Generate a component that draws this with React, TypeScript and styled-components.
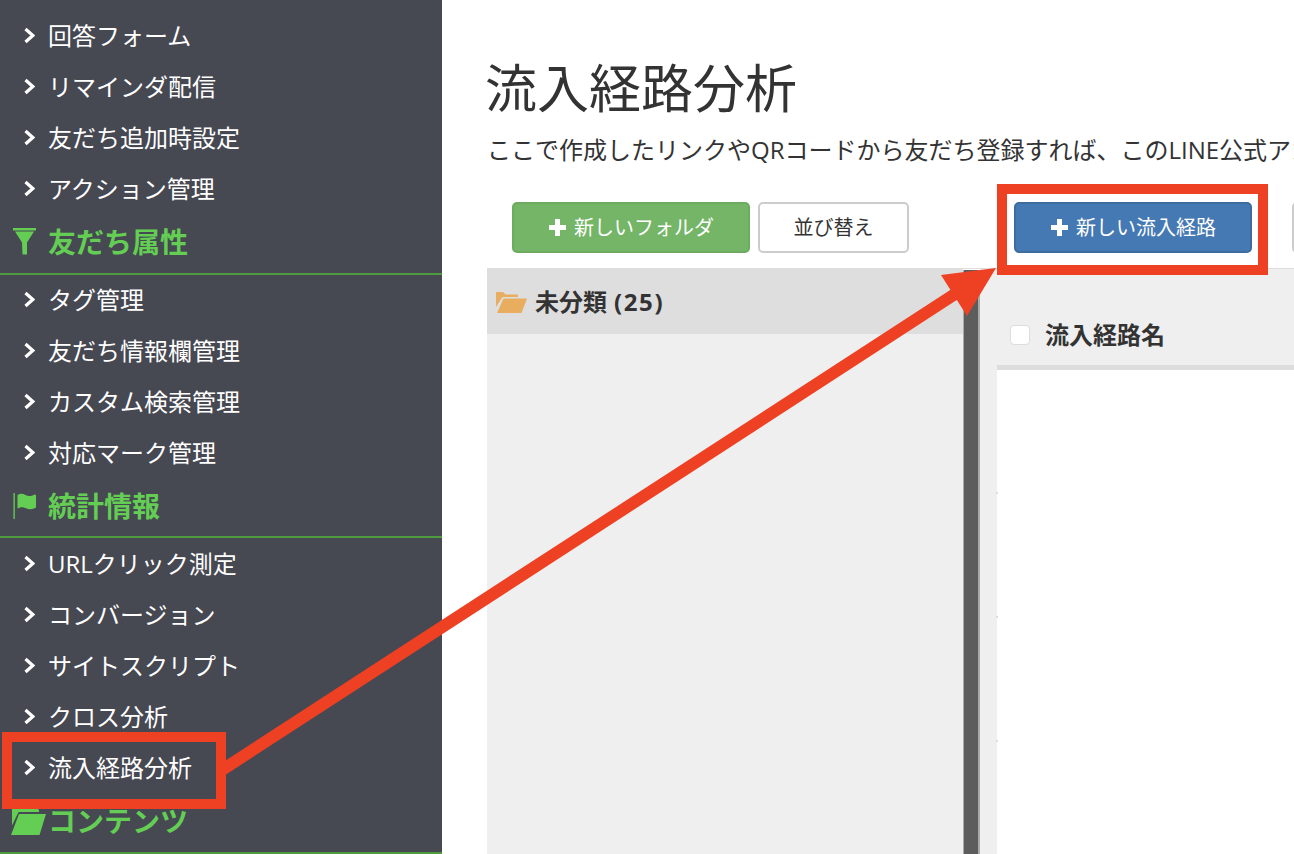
import React from "react";
import styled, { createGlobalStyle } from "styled-components";

const Global = createGlobalStyle`
  html, body { margin: 0; padding: 0; background: #fff; }
  body { font-family: "Open Sans", "Noto Sans CJK JP", sans-serif; color: #333; }
  * { box-sizing: border-box; }
`;

const Page = styled.div`
  position: relative;
  display: flex;
  width: 1294px;
  height: 854px;
  overflow: hidden;
  background: #fff;
`;

const Sidebar = styled.nav`
  flex: 0 0 442px;
  height: 854px;
  padding-top: 10px;
  background: #464852;
  overflow: hidden;
`;

const Item = styled.div`
  display: flex;
  align-items: center;
  height: 51px;
  padding-left: 24px;
  gap: 13px;
  color: #fff;
  font-size: 24px;
  line-height: 1;
  white-space: nowrap;
`;

const Heading = styled.div<{ $flush?: boolean }>`
  position: relative;
  display: flex;
  align-items: center;
  height: ${(p) => (p.$flush ? 60 : 61)}px;
  margin-bottom: ${(p) => (p.$flush ? 0 : -1)}px;
  padding: 0 0 3px 48px;
  border-bottom: 2px solid #4d9a3f;
  color: #64ce54;
  font-size: 28px;
  font-weight: 700;
  line-height: 1;
  white-space: nowrap;
`;

const HeadingIcon = styled.svg<{ $top?: number }>`
  position: absolute;
  left: 8px;
  top: ${(p) => p.$top ?? 8}px;
  width: 40px;
  height: 40px;
  fill: #64ce54;
`;

const Chevron = styled.svg`
  flex: 0 0 11px;
  width: 11px;
  height: 17px;
  fill: none;
  stroke: #fff;
  stroke-width: 3.2;
`;

const Main = styled.main`
  flex: 1;
  min-width: 0;
  padding: 51px 0 0 45px;
  overflow: hidden;
`;

const Title = styled.h1`
  margin: 0 0 0 -2px;
  height: 75px;
  font-size: 52px;
  font-weight: 400;
  line-height: 74px;
  color: #333;
  white-space: nowrap;
`;

const Lead = styled.p`
  margin: 0;
  height: 48px;
  font-size: 24px;
  line-height: 48px;
  color: #333;
  white-space: nowrap;
`;

const Toolbar = styled.div`
  display: flex;
  align-items: center;
  height: 51px;
  margin: 28px 0 0 25px;
  white-space: nowrap;
`;

const Button = styled.div<{ $tone: "green" | "blue" | "plain"; $w: number; $after?: number }>`
  flex: 0 0 ${(p) => p.$w}px;
  display: flex;
  align-items: center;
  justify-content: center;
  gap: 7px;
  height: 51px;
  margin-right: ${(p) => p.$after ?? 0}px;
  border-radius: 5px;
  font-size: 20px;
  line-height: 1;
  color: ${(p) => (p.$tone === "plain" ? "#333" : "#fff")};
  background: ${(p) => (p.$tone === "green" ? "#74b567" : p.$tone === "blue" ? "#4579b3" : "#fff")};
  border: 2px solid ${(p) => (p.$tone === "green" ? "#6dab60" : p.$tone === "blue" ? "#3f6c9f" : "#ccc")};
`;

const Plus = styled.svg`
  width: 19px;
  height: 19px;
  fill: #fff;
`;

const Panel = styled.div`
  display: flex;
  height: 586px;
  margin: 15px 0 0 0;
  border-top: 1px solid #ddd;
`;

const FolderColumn = styled.section`
  flex: 0 0 476px;
  background: #efefef;
`;

const FolderHead = styled.div`
  display: flex;
  align-items: center;
  gap: 8px;
  height: 65px;
  padding: 0 0 0 9px;
  background: #dedede;
  font-size: 24px;
  font-weight: 700;
  line-height: 1;
  color: #333;
`;

const Count = styled.span`
  margin-left: 7px;
  font-weight: 700;
  letter-spacing: 1.6px;
`;

const Splitter = styled.div`
  flex: 0 0 17px;
  margin-top: 1px;
  background: #5c5c5c;
  border-left: 1px solid #aaa;
  border-right: 2px solid #aaa;
`;

const ListColumn = styled.section`
  flex: 1;
  padding-left: 17px;
  background: linear-gradient(to right, #efefef 17px, #fff 17px);
`;

const ListHead = styled.div`
  display: flex;
  align-items: center;
  gap: 15px;
  height: 101px;
  padding: 36px 0 0 13px;
  background: #efefef;
  border-bottom: 5px solid #ddd;
  font-size: 24px;
  font-weight: 700;
  line-height: 1;
  color: #333;
`;

const Check = styled.span`
  flex: 0 0 20px;
  height: 20px;
  background: #fff;
  border: 1px solid #ddd;
  border-radius: 4px;
`;

const Row = styled.div`
  position: relative;
  height: 124px;
  &::before {
    content: "";
    position: absolute;
    left: -1px;
    bottom: 0;
    width: 2px;
    height: 2px;
    background: #ddd;
  }
`;

const Frame = styled.div<{ $x: number; $y: number; $w: number; $h: number }>`
  position: absolute;
  left: ${(p) => p.$x}px;
  top: ${(p) => p.$y}px;
  width: ${(p) => p.$w}px;
  height: ${(p) => p.$h}px;
  border: 10px solid #ee4023;
`;

const ArrowLayer = styled.svg`
  position: absolute;
  left: 0;
  top: 0;
  width: 1294px;
  height: 854px;
  pointer-events: none;
`;

const FolderGlyph = styled.svg<{ $c: string }>`
  flex: 0 0 31px;
  width: 31px;
  height: 22px;
  fill: ${(p) => p.$c};
`;

const Arrow = () => (
  <Chevron viewBox="0 0 11 17">
    <polyline points="1.5,2 8.800,8.500 1.5,15" />
  </Chevron>
);

const NavItem = ({ label }: { label: string }) => (
  <Item>
    <Arrow />
    <span>{label}</span>
  </Item>
);

const App = () => (
  <Page>
    <Global />
    <Sidebar>
      {["回答フォーム", "リマインダ配信", "友だち追加時設定", "アクション管理"].map((t) => (
        <NavItem key={t} label={t} />
      ))}
      <Heading>
        <HeadingIcon viewBox="0 0 40 40">
          <path d="M5 6h23v2.500H5zM7 9.500h19l-7 11v12h-4.500L14 20.500z" />
        </HeadingIcon>
        友だち属性
      </Heading>
      {["タグ管理", "友だち情報欄管理", "カスタム検索管理", "対応マーク管理"].map((t) => (
        <NavItem key={t} label={t} />
      ))}
      <Heading $flush>
        <HeadingIcon $top={10} viewBox="0 0 40 40">
          <path d="M5.300 5h1.700v26H5.300z" opacity="0.8" />
          <path d="M9.500 7c3-2 5.500-1.500 8 0s5.500 1.600 9-.5l1.500.5v12.500c-3.500 2-7 2.300-10 .8s-5-1.500-8.500.3z" />
        </HeadingIcon>
        統計情報
      </Heading>
      {["URLクリック測定", "コンバージョン", "サイトスクリプト", "クロス分析", "流入経路分析"].map((t) => (
        <NavItem key={t} label={t} />
      ))}
      <Heading>
        <HeadingIcon viewBox="0 0 40 40">
          <path d="M4 24.500V6.500c0-.8.500-1.500 1.300-1.500h7.700l3 3h13.500c.8 0 1.500.7 1.500 1.500V11H12c-1 0-1.800.5-2.200 1.400z" />
          <path d="M11 13h27l-6.500 21H3z" />
        </HeadingIcon>
        コンテンツ
      </Heading>
    </Sidebar>
    <Main>
      <Title>流入経路分析</Title>
      <Lead>ここで作成したリンクやQRコードから友だち登録すれば、このLINE公式アカウントの友だちになります</Lead>
      <Toolbar>
        <Button $tone="green" $w={238} $after={8}>
          <Plus viewBox="0 0 19 19">
            <path d="M7 1h5v6h6v5h-6v6H7v-6H1V7h6z" />
          </Plus>
          新しいフォルダ
        </Button>
        <Button $tone="plain" $w={151} $after={105}>
          並び替え
        </Button>
        <Button $tone="blue" $w={238} $after={40}>
          <Plus viewBox="0 0 19 19">
            <path d="M7 1h5v6h6v5h-6v6H7v-6H1V7h6z" />
          </Plus>
          新しい流入経路
        </Button>
        <Button $tone="plain" $w={150} />
      </Toolbar>
      <Panel>
        <FolderColumn>
          <FolderHead>
            <FolderGlyph $c="#e9ad5f" viewBox="0 0 31 22">
              <path d="M0 16V2c0-.7.500-1 1-1h6l2.500 2.500H21c.7 0 1 .4 1 1V6H7.500c-.8 0-1.400.4-1.700 1z" />
              <path d="M7.500 7.500H31L25.500 22H1z" />
            </FolderGlyph>
            <span>
              未分類<Count>(25)</Count>
            </span>
          </FolderHead>
        </FolderColumn>
        <Splitter />
        <ListColumn>
          <ListHead>
            <Check />
            流入経路名
          </ListHead>
          <Row />
          <Row />
          <Row />
        </ListColumn>
      </Panel>
    </Main>
    <Frame $x={2} $y={732} $w={224} $h={77} />
    <Frame $x={997} $y={184} $w={271} $h={91} />
    <ArrowLayer viewBox="0 0 1294 854">
      <line x1="222" y1="770" x2="955" y2="294" stroke="#ee4023" strokeWidth="12" />
      <polygon points="996,268 941,275 967,316" fill="#ee4023" />
    </ArrowLayer>
  </Page>
);

export default App;
